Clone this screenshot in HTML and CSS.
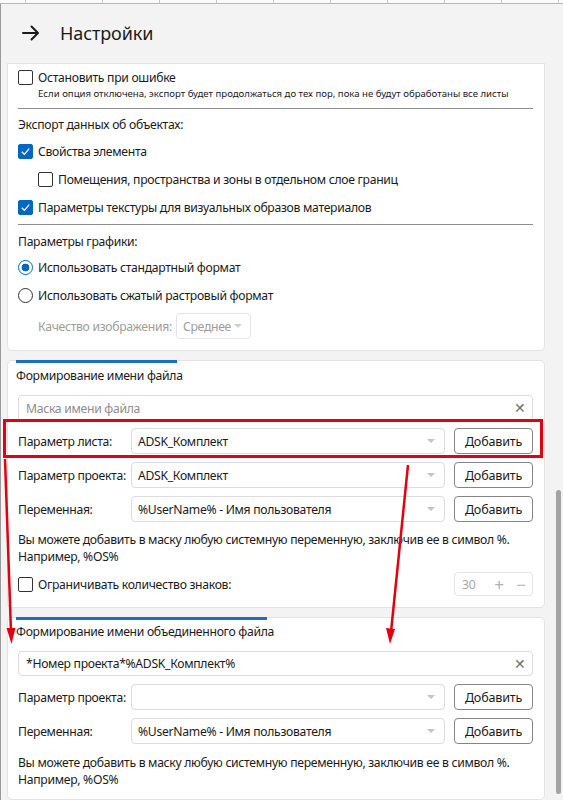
FILE: index.html
```html
<!DOCTYPE html>
<html lang="ru">
<head>
<meta charset="utf-8">
<link rel="stylesheet" href="styles.css">
</head>
<body>
<div class="strip"><span></span><span></span><span></span><span></span><span></span><span></span><span></span><span></span><span></span><span></span></div>
<div class="window">
  <header class="hdr">
    <svg class="back" width="20" height="20" viewBox="0 0 20 20"><path d="M2 10H17M10.5 3.5L17 10L10.5 16.5" fill="none" stroke="#1a1a1a" stroke-width="2" stroke-linecap="round" stroke-linejoin="round"/></svg>
    <h1 class="title">Настройки</h1>
  </header>
  <main class="content">
    <section class="card card1">
      <label class="chk-row"><span class="cb"></span>Остановить при ошибке</label>
      <div class="hint">Если опция отключена, экспорт будет продолжаться до тех пор, пока не будут обработаны все листы</div>
      <div class="divider d1"></div>
      <div class="group-title gt1">Экспорт данных об объектах:</div>
      <label class="chk-row tall"><span class="cb on"><svg viewBox="0 0 15 15"><path d="M3.2 7.8L6.2 10.8L11.8 4.2" fill="none" stroke="#fff" stroke-width="1.5"/></svg></span>Свойства элемента</label>
      <label class="chk-row tall indent"><span class="cb"></span>Помещения, пространства и зоны в отдельном слое границ</label>
      <label class="chk-row tall"><span class="cb on"><svg viewBox="0 0 15 15"><path d="M3.2 7.8L6.2 10.8L11.8 4.2" fill="none" stroke="#fff" stroke-width="1.5"/></svg></span>Параметры текстуры для визуальных образов материалов</label>
      <div class="divider d2"></div>
      <div class="group-title gt2">Параметры графики:</div>
      <label class="chk-row tall"><span class="rb on"></span>Использовать стандартный формат</label>
      <label class="chk-row tall"><span class="rb"></span>Использовать сжатый растровый формат</label>
      <div class="quality">
        <span class="q-label">Качество изображения:</span>
        <span class="dd disabled">Среднее<i class="caret"></i></span>
      </div>
    </section>

    <section class="card card2">
      <div class="tabbar w1"></div>
      <div class="sec-title">Формирование имени файла</div>
      <div class="field mask"><span class="ph">Маска имени файла</span><span class="x">✕</span></div>
      <div class="rows">
        <div class="row"><span class="lbl">Параметр листа:</span><span class="combo">ADSK_Комплект<i class="caret"></i></span><button class="btn">Добавить</button></div>
        <div class="row"><span class="lbl">Параметр проекта:</span><span class="combo">ADSK_Комплект<i class="caret"></i></span><button class="btn">Добавить</button></div>
        <div class="row"><span class="lbl">Переменная:</span><span class="combo">%UserName% - Имя пользователя<i class="caret"></i></span><button class="btn">Добавить</button></div>
      </div>
      <p class="note">Вы можете добавить в маску любую системную переменную, заключив ее в символ %.<br>Например, %OS%</p>
      <div class="limit">
        <label class="chk-row"><span class="cb"></span>Ограничивать количество знаков:</label>
        <span class="spin"><span class="sv">30</span><span class="sb">+</span><span class="sb">−</span></span>
      </div>
    </section>

    <section class="card card3">
      <div class="tabbar w2"></div>
      <div class="sec-title">Формирование имени объединенного файла</div>
      <div class="field mask"><span class="val">*Номер проекта*%ADSK_Комплект%</span><span class="x">✕</span></div>
      <div class="rows">
        <div class="row"><span class="lbl">Параметр проекта:</span><span class="combo"><i class="caret"></i></span><button class="btn">Добавить</button></div>
        <div class="row"><span class="lbl">Переменная:</span><span class="combo">%UserName% - Имя пользователя<i class="caret"></i></span><button class="btn">Добавить</button></div>
      </div>
      <p class="note n3">Вы можете добавить в маску любую системную переменную, заключив ее в символ %.<br>Например, %OS%</p>
    </section>
  </main>
  <div class="thumb"></div>
</div>

<svg class="annot" width="563" height="800" viewBox="0 0 563 800">
  <rect x="4.5" y="420.5" width="537" height="36" fill="none" stroke="#e3000f" stroke-width="3"/>
  <path d="M5 459L11 632" stroke="#e3000f" stroke-width="2.5" fill="none"/>
  <path d="M6.5 628L11.5 644L15.5 628Z" fill="#e3000f"/>
  <path d="M408 465L391 632" stroke="#e3000f" stroke-width="2.5" fill="none"/>
  <path d="M386 628L390 644L395 629Z" fill="#e3000f"/>
</svg>
</body>
</html>
```

FILE: styles.css
```css
* { box-sizing: border-box; }
html, body { margin: 0; padding: 0; }
body {
  width: 563px;
  height: 800px;
  overflow: hidden;
  background: #f3f3f3;
  font-family: "Noto Sans", "Open Sans", sans-serif;
  font-size: 12.2px;
  letter-spacing: -0.3px;
  color: #1b1b1b;
  position: relative;
}

.strip {
  height: 4px;
  display: flex;
  background: #fafafa;
  border-bottom: 1px solid #b8b8b8;
}
.strip span {
  flex: 0 0 57px;
  border-right: 1px solid #c8c8c8;
}
.strip span:first-child { flex-basis: 26px; }
.strip span:nth-child(2) { flex-basis: 77px; }

.window {
  height: 796px;
  border-left: 1px solid #9a9a9a;
  position: relative;
}

.hdr {
  height: 59px;
  display: flex;
  align-items: center;
  padding-left: 20px;
  padding-bottom: 2px;
}
.back { margin-right: 19px; }
.title {
  margin: 0;
  font-weight: 400;
  font-size: 18px;
  letter-spacing: -0.1px;
  color: #1b1b1b;
}

.content {
  padding: 0 18px 0 6px;
  display: flex;
  flex-direction: column;
  gap: 9px;
}

.card {
  background: #fff;
  border: 1px solid #e3e3e3;
  border-radius: 5px;
  padding: 3px 11px 11px 10px;
}
.card1 { border-top-left-radius: 0; border-top-right-radius: 0; }

.chk-row {
  display: flex;
  align-items: center;
  height: 20px;
  white-space: nowrap;
}
.chk-row.tall { height: 28px; }
.chk-row.indent { padding-left: 20px; }

.cb {
  width: 15px;
  height: 15px;
  border: 1px solid #333;
  border-radius: 2px;
  margin-right: 5px;
  flex: none;
  display: flex;
}
.cb.on { background: #0067c0; border-color: #0067c0; }
.cb svg { width: 13px; height: 13px; }

.rb {
  width: 15px;
  height: 15px;
  border: 1px solid #333;
  border-radius: 50%;
  margin-right: 5px;
  flex: none;
}
.rb.on {
  border-color: #0067c0;
  background: radial-gradient(circle, #0067c0 0 3.6px, #fff 4.2px);
}

.hint {
  font-size: 9.6px;
  letter-spacing: 0;
  line-height: 14px;
  padding-left: 20px;
  color: #1b1b1b;
  white-space: nowrap;
}

.divider { height: 1px; background: #8d8d8d; }
.d1 { margin-top: 7px; }
.d2 { margin-top: 3px; }

.group-title { height: 20px; line-height: 20px; }
.gt1 { margin-top: 6px; margin-bottom: 2px; }
.gt2 { margin-top: 7px; margin-bottom: 1px; }

.quality {
  display: flex;
  align-items: center;
  margin-top: 4px;
  padding-left: 20px;
  height: 26px;
}
.q-label { color: #9d9d9d; width: 138px; white-space: nowrap; }

.dd {
  position: relative;
  height: 26px;
  width: 75px;
  border: 1px solid #e4e4e4;
  border-radius: 4px;
  padding-left: 6px;
  display: flex;
  align-items: center;
  color: #9d9d9d;
}
.dd .caret { right: 8px; border-top-color: #d0d0d0; }

.caret {
  position: absolute;
  top: 50%;
  right: 9px;
  margin-top: -2px;
  width: 0;
  height: 0;
  border-left: 4px solid transparent;
  border-right: 4px solid transparent;
  border-top: 4px solid #c4c4c4;
}

.card2, .card3 { padding-top: 0; }
.tabbar {
  height: 3px;
  margin-top: -1px;
  margin-left: -2px;
  background: #1a6fc0;
}
.tabbar.w1 { width: 161px; }
.tabbar.w2 { width: 251px; }

.sec-title {
  height: 20px;
  line-height: 20px;
  margin-left: -2px;
  margin-top: 3px;
}
.card3 .sec-title { margin-top: 2px; }

.field {
  height: 26px;
  border: 1px solid #dcdcdc;
  border-radius: 4px;
  display: flex;
  align-items: center;
  justify-content: space-between;
  padding: 0 6px 0 7px;
  margin-top: 9px;
}
.card3 .field { height: 25px; margin-top: 9px; }
.ph { color: #8e8e8e; }
.x { color: #707070; font-size: 14px; line-height: 1; }

.rows {
  display: flex;
  flex-direction: column;
  gap: 8px;
  margin-top: 7px;
}
.card3 .rows { margin-top: 8px; }
.row {
  display: flex;
  align-items: center;
  height: 26px;
}
.lbl { width: 113px; flex: none; white-space: nowrap; }
.combo {
  position: relative;
  width: 314px;
  height: 26px;
  border: 1px solid #dcdcdc;
  border-radius: 4px;
  display: flex;
  align-items: center;
  padding-left: 6px;
  flex: none;
}
.btn {
  margin-left: 9px;
  width: 79px;
  height: 26px;
  border: 1px solid #858585;
  border-radius: 4px;
  background: #fff;
  font: inherit;
  font-size: 12.6px;
  letter-spacing: -0.2px;
  color: #1b1b1b;
  padding: 0;
}

.note {
  margin: 9px 0 0;
  line-height: 17px;
  white-space: nowrap;
}
.note.n3 { margin-top: 10px; }

.limit {
  display: flex;
  align-items: center;
  justify-content: space-between;
  margin-top: 7px;
  height: 24px;
}
.spin {
  width: 79px;
  height: 24px;
  border: 1px solid #e4e4e4;
  border-radius: 4px;
  display: flex;
  align-items: center;
  padding-left: 7px;
  color: #a8a8a8;
}
.sv { flex: 1; }
.sb { width: 22px; text-align: center; font-size: 17px; line-height: 1; color: #b0b0b0; }

.thumb {
  position: absolute;
  left: 555px;
  top: 486px;
  width: 5px;
  height: 304px;
  border-radius: 3px;
  background: #a3a3a3;
}

.annot {
  position: absolute;
  left: 0;
  top: 0;
  pointer-events: none;
}
```
